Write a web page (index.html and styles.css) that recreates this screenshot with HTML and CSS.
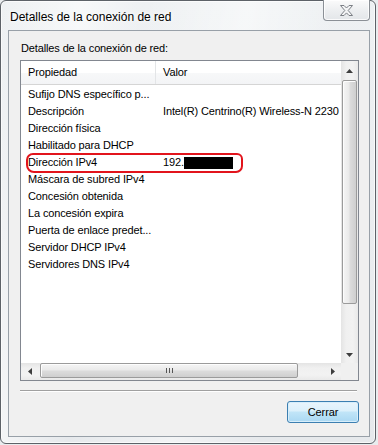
FILE: index.html
```html
<!DOCTYPE html>
<html lang="es">
<head>
<meta charset="utf-8">
<title>Detalles de la conexión de red</title>
<link rel="stylesheet" href="styles.css">
</head>
<body>
<div class="window">
  <div class="titlebar">
    <span class="title">Detalles de la conexión de red</span>
    <div class="close-btn">
      <svg width="15" height="11" viewBox="0 0 15 11"><path d="M1.5 0.5h3.5l2.5 2.5l2.5-2.5h3.5l-4.3 5l4.3 5h-3.5l-2.5-2.6l-2.5 2.6h-3.5l4.3-5z" fill="#f4f5f6" stroke="#7b7f85" stroke-width="1" stroke-linejoin="round"/></svg>
    </div>
  </div>
  <div class="client">
    <div class="group-label">Detalles de la conexión de red:</div>
    <div class="listbox">
      <div class="list-body">
        <div class="list-view">
          <div class="list-header">
            <div class="hcell hcell-prop">Propiedad</div>
            <div class="hcell hcell-val">Valor</div>
          </div>
          <div class="row"><span class="c1">Sufijo DNS específico p...</span><span class="c2"></span></div>
          <div class="row"><span class="c1">Descripción</span><span class="c2">Intel(R) Centrino(R) Wireless-N 2230</span></div>
          <div class="row"><span class="c1">Dirección física</span><span class="c2"></span></div>
          <div class="row"><span class="c1">Habilitado para DHCP</span><span class="c2"></span></div>
          <div class="row row-marked"><span class="c1">Dirección IPv4</span><span class="c2">192.<span class="redact"></span></span><span class="mark"></span></div>
          <div class="row"><span class="c1">Máscara de subred IPv4</span><span class="c2"></span></div>
          <div class="row"><span class="c1">Concesión obtenida</span><span class="c2"></span></div>
          <div class="row"><span class="c1">La concesión expira</span><span class="c2"></span></div>
          <div class="row"><span class="c1">Puerta de enlace predet...</span><span class="c2"></span></div>
          <div class="row"><span class="c1">Servidor DHCP IPv4</span><span class="c2"></span></div>
          <div class="row"><span class="c1">Servidores DNS IPv4</span><span class="c2"></span></div>
        </div>
        <div class="vscroll">
          <div class="sb-btn"><svg width="7" height="4" viewBox="0 0 7 4"><path d="M0 4L3.5 0L7 4z" fill="#3d3d3d"/></svg></div>
          <div class="vthumb"></div>
          <div class="sb-fill"></div>
          <div class="sb-btn"><svg width="7" height="4" viewBox="0 0 7 4"><path d="M0 0L3.5 4L7 0z" fill="#3d3d3d"/></svg></div>
        </div>
      </div>
      <div class="hscroll-row">
        <div class="hscroll">
          <div class="sb-btn"><svg width="4" height="7" viewBox="0 0 4 7"><path d="M4 0L0 3.5L4 7z" fill="#3d3d3d"/></svg></div>
          <div class="hthumb"><span class="grip"></span></div>
          <div class="sb-fill"></div>
          <div class="sb-btn"><svg width="4" height="7" viewBox="0 0 4 7"><path d="M0 0L4 3.5L0 7z" fill="#3d3d3d"/></svg></div>
        </div>
        <div class="corner"></div>
      </div>
    </div>
    <div class="separator"></div>
    <div class="button-row">
      <button class="btn btn-default">Cerrar</button>
    </div>
  </div>
</div>
</body>
</html>
```

FILE: styles.css
```css
html, body {
  margin: 0;
  padding: 0;
}

body {
  width: 378px;
  height: 445px;
  overflow: hidden;
  background: #e9ecee;
  font-family: "Liberation Sans", Arial, sans-serif;
  font-size: 11px;
  color: #000;
}

.window {
  position: relative;
  box-sizing: border-box;
  width: 376px;
  height: 444px;
  border: 1px solid #5d6268;
  border-radius: 6px;
  background:
    linear-gradient(100deg, rgba(255,255,255,0) 0%, rgba(255,255,255,0.55) 18%, rgba(255,255,255,0) 32%, rgba(255,255,255,0.5) 55%, rgba(255,255,255,0) 75%),
    linear-gradient(#eef1f3, #e6e9ec);
  box-shadow: inset 0 0 0 1px rgba(255,255,255,0.7);
}

.titlebar {
  position: relative;
  box-sizing: border-box;
  height: 29px;
  padding: 9px 0 0 9px;
  font-size: 12px;
  line-height: 14px;
}

.title {
  color: #000;
  text-shadow: 0 0 6px #fff, 0 0 3px #fff;
}

.close-btn {
  position: absolute;
  left: 322px;
  top: -1px;
  box-sizing: border-box;
  width: 47px;
  height: 21px;
  border: 1px solid #8b9096;
  border-top: none;
  border-radius: 0 0 4px 4px;
  background: linear-gradient(#fbfbfb, #eceef0 55%, #e3e6e9);
  box-shadow: inset 0 0 0 1px rgba(255,255,255,0.8);
  display: flex;
  align-items: center;
  justify-content: center;
  padding-top: 1px;
}

.client {
  box-sizing: border-box;
  margin-left: 7px;
  width: 362px;
  height: 407px;
  border: 1px solid #98a0a8;
  background: #f0f0f0;
  padding-left: 11px;
  letter-spacing: -0.13px;
}

.group-label {
  margin-top: 11px;
  padding-left: 1px;
  line-height: 13px;
  height: 13px;
}

.listbox {
  box-sizing: border-box;
  margin-top: 5px;
  width: 339px;
  height: 321px;
  border: 1px solid #828790;
  background: #fff;
}

.list-body {
  display: flex;
  height: 302px;
}

.list-view {
  width: 320px;
  overflow: hidden;
}

.list-header {
  display: flex;
  height: 23px;
  border-bottom: 1px solid #d5d5d5;
  background: linear-gradient(#ffffff, #ffffff 50%, #f7f8f9 51%, #f3f4f6);
  margin-bottom: 1px;
}

.hcell {
  box-sizing: border-box;
  line-height: 23px;
  padding-left: 7px;
}

.hcell-prop {
  width: 135px;
  border-right: 1px solid #e3e5e7;
}

.hcell-val {
  flex: 1;
  padding-left: 7px;
}

.row {
  position: relative;
  display: flex;
  height: 17px;
  line-height: 17px;
  white-space: nowrap;
}

.c1 {
  box-sizing: border-box;
  width: 141px;
  padding-left: 7px;
}

.c2 {
  display: flex;
  align-items: center;
  padding-left: 1px;
}

.redact {
  display: inline-block;
  width: 49px;
  height: 12px;
  background: #000;
  margin-top: 1px;
}

.mark {
  position: absolute;
  left: 5px;
  top: -1px;
  width: 217px;
  height: 20px;
  box-sizing: border-box;
  border: 2px solid #e2141c;
  border-radius: 7px 6px 7px 8px;
}

.vscroll {
  width: 17px;
  display: flex;
  flex-direction: column;
  background: linear-gradient(to right, #e4e4e4, #f0f0f0 30%, #f2f2f2 70%, #e9e9e9);
}

.sb-btn {
  flex: 0 0 17px;
  display: flex;
  align-items: center;
  justify-content: center;
}

.vscroll .sb-btn:first-child {
  padding-top: 1px;
}

.sb-fill {
  flex: 1;
}

.vthumb {
  box-sizing: border-box;
  margin: 1px 0 0 1px;
  width: 15px;
  height: 224px;
  border: 1px solid #9b9b9b;
  border-radius: 2px;
  background: linear-gradient(to right, #f5f5f5, #eaeaea 45%, #dcdcdc 55%, #cfcfcf);
  box-shadow: inset 1px 1px 0 #fdfdfd;
}

.hscroll-row {
  display: flex;
  height: 17px;
}

.hscroll {
  width: 320px;
  display: flex;
  background: linear-gradient(#e4e4e4, #f0f0f0 30%, #f2f2f2 70%, #e9e9e9);
}

.hthumb {
  box-sizing: border-box;
  margin: 0 0 1px 2px;
  width: 258px;
  height: 15px;
  border: 1px solid #9b9b9b;
  border-radius: 2px;
  background: linear-gradient(#f5f5f5, #eaeaea 45%, #dcdcdc 55%, #cfcfcf);
  box-shadow: inset 1px 1px 0 #fdfdfd;
  display: flex;
  align-items: center;
  justify-content: center;
}

.grip {
  width: 7px;
  height: 5px;
  background:
    linear-gradient(to right, #555 0 1px, transparent 1px 3px, #555 3px 4px, transparent 4px 6px, #555 6px 7px);
}

.corner {
  width: 17px;
  background: #f0f0f0;
}

.separator {
  margin-top: 9px;
  width: 337px;
  height: 1px;
  background: #a0a0a0;
  border-bottom: 1px solid #ffffff;
}

.button-row {
  display: flex;
  justify-content: flex-end;
  width: 339px;
  margin-top: 9px;
}

.btn {
  box-sizing: border-box;
  width: 72px;
  height: 22px;
  margin: 0;
  padding: 0;
  font-family: "Liberation Sans", Arial, sans-serif;
  font-size: 11px;
  letter-spacing: -0.13px;
  color: #000;
  border: 1px solid #3c7fb1;
  border-radius: 3px;
  background: linear-gradient(#e9f5fc, #dcf0fb 45%, #c1e5f8 50%, #aad8f3);
  box-shadow: inset 0 0 0 1px #d7eefb;
}
```
